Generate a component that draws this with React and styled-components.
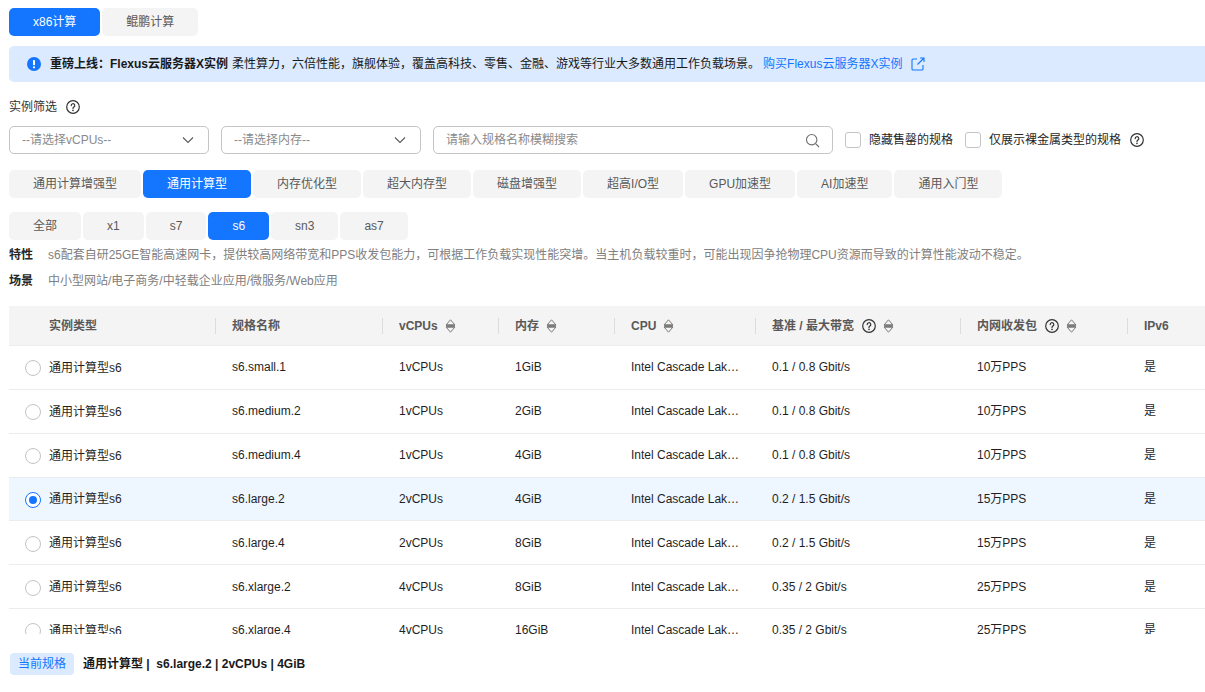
import React from 'react';
import styled, { createGlobalStyle } from 'styled-components';

const Global = createGlobalStyle`
  html, body { margin: 0; padding: 0; background: #fff; overflow: hidden; }
  body { font-family: "Liberation Sans", "Noto Sans CJK SC", sans-serif; font-size: 12px; line-height: 16px; color: #1a1a1a; }
  * { box-sizing: border-box; }
`;

const Page = styled.div`
  width: 1205px; height: 692px; padding: 8px 0 0 9px; overflow: hidden;
  display: flex; flex-direction: column;
`;
const TabRow = styled.div`display: flex; gap: 2px; margin-top: ${p => p.$mt || 0}px;`;
const Tab = styled.div`
  height: 28px; padding: 0 24px; border-radius: 5px; display: flex; align-items: center; justify-content: center;
  font-size: 12px; background: ${p => p.$active ? '#1476ff' : '#f4f4f4'}; color: ${p => p.$active ? '#fff' : '#595959'};
`;
const Banner = styled.div`
  margin-top: 10px; height: 36px; background: #dbeafe; border-radius: 5px 0 0 5px; display: flex; align-items: center;
  padding-left: 18px; white-space: nowrap; color: #191919;
`;
const BannerBold = styled.b`margin-left: 9px; margin-right: 4px; font-weight: 700;`;
const BannerLink = styled.span`color: #1476ff; margin-left: 3px;`;
const LinkIcon = styled.svg`margin-left: 9px; width: 14px; height: 14px;`;
const FilterTitle = styled.div`margin-top: 17px; height: 16px; display: flex; align-items: center; gap: 9px; color: #333;`;
const FilterRow = styled.div`margin-top: 11px; display: flex; align-items: center; height: 28px;`;
const Field = styled.div`
  width: ${p => p.$w}px; height: 28px; margin-right: 12px; border: 1px solid #c4c4c4; border-radius: 5px; background: #fff;
  display: flex; align-items: center; justify-content: space-between; padding: 0 12px; color: #8a8a8a;
`;
const Check = styled.label`display: flex; align-items: center; color: #262626; margin-right: ${p => p.$mr}px;`;
const Box = styled.span`width: 16px; height: 16px; border: 1px solid #c4c4c4; border-radius: 3px; margin-right: 8px; background: #fff;`;
const Line = styled.div`display: flex; align-items: center; height: 16px; margin-top: ${p => p.$mt}px; white-space: nowrap;`;
const LineLabel = styled.b`width: 39px; font-weight: 700; color: #262626;`;
const LineText = styled.span`color: #808080;`;
const TableWrap = styled.div`margin-top: 17px; height: 328px; overflow: hidden; flex: none;`;
const cols = '206px 167px 116px 116px 141px 205px 167px 67px';
const Head = styled.div`
  display: grid; grid-template-columns: ${cols}; height: 40px; background: #f4f4f4; border-bottom: 1px solid #ececec; align-items: center;
`;
const HeadCell = styled.div`
  height: 16px; display: flex; align-items: center; gap: 7px; font-weight: 700; color: #595959;
  padding-left: ${p => p.$first ? 40 : 16}px; border-left: ${p => p.$first ? 'none' : '1px solid #dcdcdc'};
  white-space: nowrap;
`;
const Row = styled.div`
  display: grid; grid-template-columns: ${cols}; height: 43.85px; align-items: center; border-bottom: 1px solid #ececec;
  background: ${p => p.$sel ? '#eef6ff' : '#fff'};
`;
const Cell = styled.div`padding-left: 17px; color: #1f1f1f; white-space: nowrap; overflow: hidden; text-overflow: ellipsis; padding-right: 12px;`;
const TypeCell = styled.div`display: flex; align-items: center; padding-left: 16px; color: #1f1f1f; white-space: nowrap;`;
const RadioLabel = styled.span`margin-top: 1px;`;
const Radio = styled.span`
  width: 16px; height: 16px; border-radius: 50%; margin: 2px 8px 0 0; background: #fff; flex: none; display: flex; align-items: center; justify-content: center;
  border: 1px solid ${p => p.$on ? '#1476ff' : '#c4c4c4'};
  &::after { content: ''; width: 8px; height: 8px; border-radius: 50%; background: ${p => p.$on ? '#1476ff' : 'transparent'}; }
`;
const Footer = styled.div`margin-top: 19px; display: flex; align-items: center; height: 22px; padding-left: 1px;`;
const FooterTag = styled.span`
  height: 22px; width: 64px; background: #dbeafe; color: #1476ff; border-radius: 4px; display: flex; align-items: center; justify-content: center;
`;
const FooterText = styled.b`margin-left: 9px; font-weight: 700; color: #191919; white-space: pre;`;
const ChevronIcon = styled.svg`margin-right: 2px; width: 12px; height: 8px;`;
const HelpIcon = styled.svg`width: 14px; height: 14px; flex: none; margin-left: ${p => p.$ml || 0}px;`;

const Help = ({ ml }) => (
  <HelpIcon $ml={ml} viewBox="0 0 14 14" fill="none" stroke="#333" strokeWidth="1.2">
    <circle cx="7" cy="7" r="6.3" />
    <path d="M5.2 5.6a1.8 1.8 0 1 1 2.7 1.5c-.6.4-.9.7-.9 1.4" strokeLinecap="round" />
    <circle cx="7" cy="10.4" r=".8" fill="#333" stroke="none" />
  </HelpIcon>
);
const Sort = () => (
  <svg width="11" height="14" viewBox="0 0 11 14" fill="none">
    <path d="M5.5 .8 L10 6 H1 Z" stroke="#7a7a7a" strokeWidth="1" strokeLinejoin="round" fill="none" />
    <path d="M5.5 13.2 L10 8 H1 Z" stroke="#7a7a7a" strokeWidth="1" strokeLinejoin="round" fill="none" />
    <rect x="1.2" y="5.5" width="8.6" height="3" fill="#7a7a7a" />
  </svg>
);
const Chevron = () => (
  <ChevronIcon viewBox="0 0 12 8" fill="none" stroke="#595959" strokeWidth="1.1"><path d="M1 1.5 L6 6.5 L11 1.5" /></ChevronIcon>
);
const Search = () => (
  <svg width="15" height="15" viewBox="0 0 15 15" fill="none" stroke="#6e6e6e" strokeWidth="1.1">
    <circle cx="6.7" cy="6.7" r="5.2" /><path d="M10.6 10.6 L14 14" />
  </svg>
);
const Info = () => (
  <svg width="14" height="14" viewBox="0 0 14 14">
    <circle cx="7" cy="7" r="7" fill="#1476ff" />
    <rect x="6" y="3" width="2" height="5.2" rx=".6" fill="#fff" />
    <circle cx="7" cy="10.3" r="1.1" fill="#fff" />
  </svg>
);

const types = ['通用计算增强型', '通用计算型', '内存优化型', '超大内存型', '磁盘增强型', '超高I/O型', 'GPU加速型', 'AI加速型', '通用入门型'];
const subs = ['全部', 'x1', 's7', 's6', 'sn3', 'as7'];
const rows = [
  ['s6.small.1', '1vCPUs', '1GiB', '0.1 / 0.8 Gbit/s', '10万PPS'],
  ['s6.medium.2', '1vCPUs', '2GiB', '0.1 / 0.8 Gbit/s', '10万PPS'],
  ['s6.medium.4', '1vCPUs', '4GiB', '0.1 / 0.8 Gbit/s', '10万PPS'],
  ['s6.large.2', '2vCPUs', '4GiB', '0.2 / 1.5 Gbit/s', '15万PPS', true],
  ['s6.large.4', '2vCPUs', '8GiB', '0.2 / 1.5 Gbit/s', '15万PPS'],
  ['s6.xlarge.2', '4vCPUs', '8GiB', '0.35 / 2 Gbit/s', '25万PPS'],
  ['s6.xlarge.4', '4vCPUs', '16GiB', '0.35 / 2 Gbit/s', '25万PPS'],
];

export default function App() {
  return (
    <Page>
      <Global />
      <TabRow>
        <Tab $active>x86计算</Tab>
        <Tab>鲲鹏计算</Tab>
      </TabRow>
      <Banner>
        <Info />
        <BannerBold>重磅上线：Flexus云服务器X实例</BannerBold>
        柔性算力，六倍性能，旗舰体验，覆盖高科技、零售、金融、游戏等行业大多数通用工作负载场景。
        <BannerLink>购买Flexus云服务器X实例</BannerLink>
        <LinkIcon viewBox="0 0 14 14" fill="none" stroke="#1476ff" strokeWidth="1.1">
          <path d="M6 2 H2 a1 1 0 0 0 -1 1 V12 a1 1 0 0 0 1 1 H11 a1 1 0 0 0 1 -1 V8" />
          <path d="M6.5 7.5 L13 1 M9 1 H13 V5" />
        </LinkIcon>
      </Banner>
      <FilterTitle>实例筛选 <Help /></FilterTitle>
      <FilterRow>
        <Field $w={200}>--请选择vCPUs--<Chevron /></Field>
        <Field $w={200}>--请选择内存--<Chevron /></Field>
        <Field $w={400}>请输入规格名称模糊搜索<Search /></Field>
        <Check $mr={12}><Box />隐藏售罄的规格</Check>
        <Check $mr={9}><Box />仅展示裸金属类型的规格</Check>
        <Help />
      </FilterRow>
      <TabRow $mt={16}>
        {types.map(t => <Tab key={t} $active={t === '通用计算型'}>{t}</Tab>)}
      </TabRow>
      <TabRow $mt={14}>
        {subs.map(t => <Tab key={t} $active={t === 's6'}>{t}</Tab>)}
      </TabRow>
      <Line $mt={7}><LineLabel>特性</LineLabel><LineText>s6配套自研25GE智能高速网卡，提供较高网络带宽和PPS收发包能力，可根据工作负载实现性能突增。当主机负载较重时，可能出现因争抢物理CPU资源而导致的计算性能波动不稳定。</LineText></Line>
      <Line $mt={10}><LineLabel>场景</LineLabel><LineText>中小型网站/电子商务/中轻载企业应用/微服务/Web应用</LineText></Line>
      <TableWrap>
        <Head>
          <HeadCell $first>实例类型</HeadCell>
          <HeadCell>规格名称</HeadCell>
          <HeadCell>vCPUs<Sort /></HeadCell>
          <HeadCell>内存<Sort /></HeadCell>
          <HeadCell>CPU<Sort /></HeadCell>
          <HeadCell>基准 / 最大带宽<Help ml={1} /><Sort /></HeadCell>
          <HeadCell>内网收发包<Help ml={1} /><Sort /></HeadCell>
          <HeadCell>IPv6</HeadCell>
        </Head>
        {rows.map(r => (
          <Row key={r[0]} $sel={r[5]}>
            <TypeCell><Radio $on={r[5]} /><RadioLabel>通用计算型s6</RadioLabel></TypeCell>
            <Cell>{r[0]}</Cell>
            <Cell>{r[1]}</Cell>
            <Cell>{r[2]}</Cell>
            <Cell>Intel Cascade Lake 3.0GHz</Cell>
            <Cell>{r[3]}</Cell>
            <Cell>{r[4]}</Cell>
            <Cell>是</Cell>
          </Row>
        ))}
      </TableWrap>
      <Footer>
        <FooterTag>当前规格</FooterTag>
        <FooterText>通用计算型 |  s6.large.2 | 2vCPUs | 4GiB</FooterText>
      </Footer>
    </Page>
  );
}
